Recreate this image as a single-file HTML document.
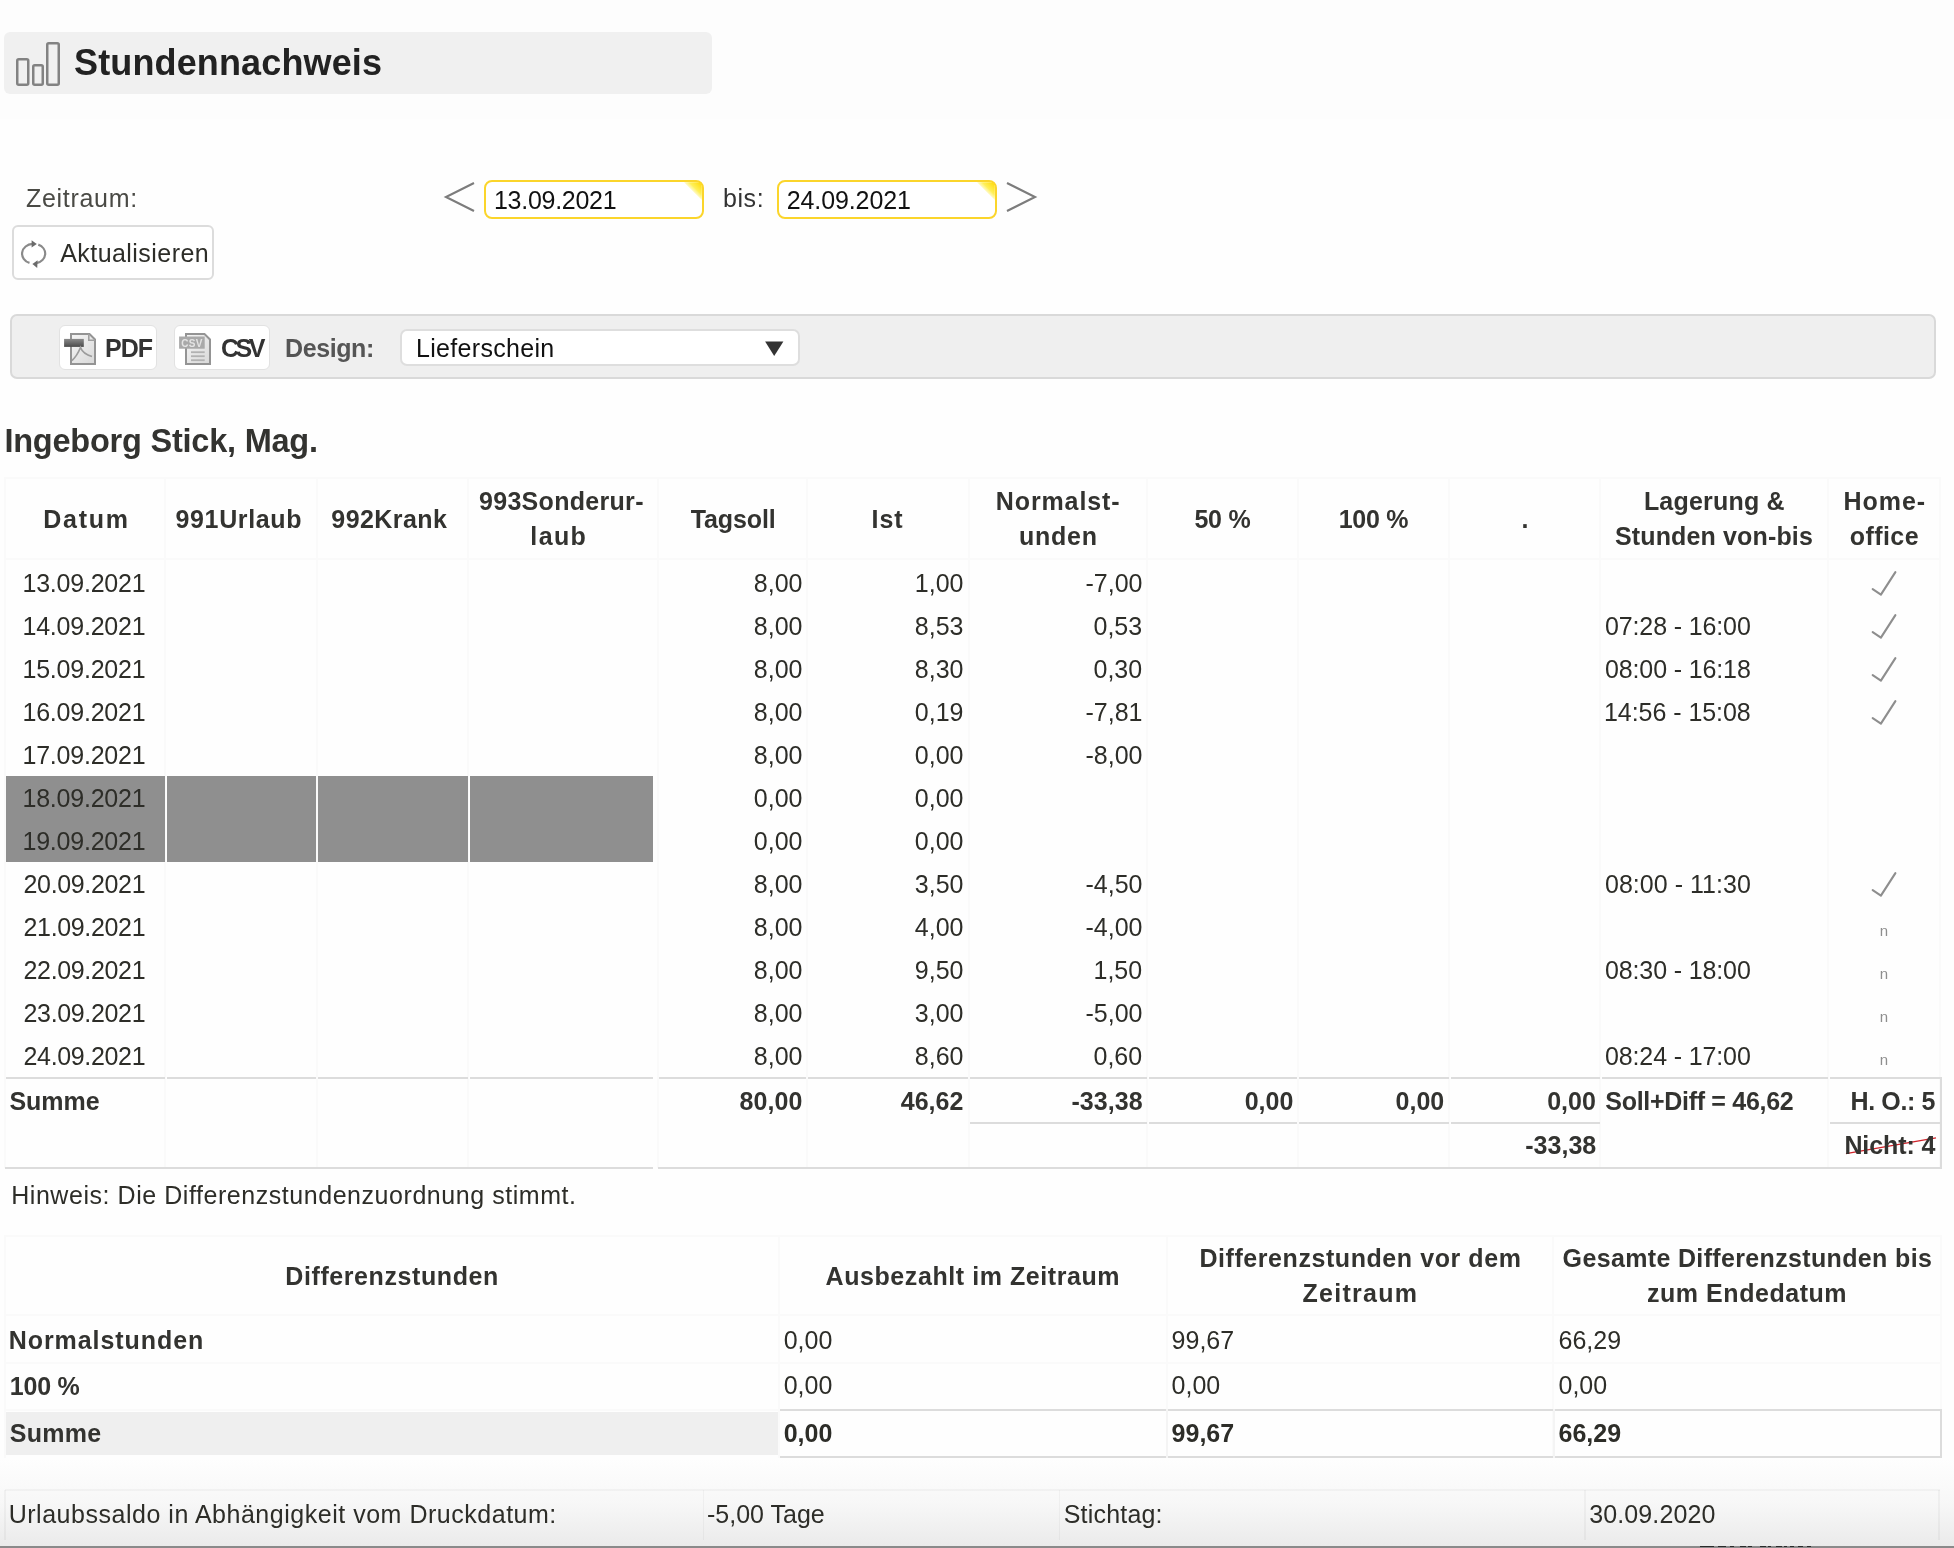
<!DOCTYPE html>
<html><head><meta charset="utf-8"><title>Stundennachweis</title>
<style>
html,body{margin:0;padding:0;background:#fff;}
#root{position:relative;width:1954px;height:1548px;overflow:hidden;background:#fefefe;font-family:"Liberation Sans", sans-serif;}
.t{position:absolute;white-space:pre;line-height:1;font-family:"Liberation Sans", sans-serif;}
#root{will-change:transform;}
</style></head><body><div id="root">
<div style="position:absolute;left:0;top:1459px;width:1954px;height:87px;background:linear-gradient(to bottom, rgba(255,255,255,0) 0%, rgba(200,200,200,0.12) 50%, rgba(190,190,190,0.30) 100%);"></div>
<div style="position:absolute;left:0px;top:0px;width:1954px;height:119px;background:#fdfdfd;"></div>
<div style="position:absolute;left:4px;top:32px;width:708px;height:62px;background:#f0f0f0;border-radius:6px;"></div>
<div style="position:absolute;left:484px;top:180px;width:220px;height:38.5px;box-sizing:border-box;border:2.5px solid #fbd52b;border-radius:8px;background:#fff;overflow:hidden;"></div>
<div style="position:absolute;left:777px;top:180px;width:220px;height:38.5px;box-sizing:border-box;border:2.5px solid #fbd52b;border-radius:8px;background:#fff;overflow:hidden;"></div>
<div style="position:absolute;left:12px;top:225px;width:202px;height:54.5px;box-sizing:border-box;border:2px solid #dcdcdc;border-radius:6px;background:#fff;"></div>
<div style="position:absolute;left:10px;top:314px;width:1926px;height:65px;box-sizing:border-box;border:2px solid #d9d9d9;border-radius:7px;background:#efefef;"></div>
<div style="position:absolute;left:58.5px;top:324.8px;width:98.5px;height:45.6px;box-sizing:border-box;border:1.5px solid #e2e2e2;border-radius:6px;background:#fff;"></div>
<div style="position:absolute;left:173.6px;top:324.8px;width:96.4px;height:45.6px;box-sizing:border-box;border:1.5px solid #e2e2e2;border-radius:6px;background:#fff;"></div>
<div style="position:absolute;left:399.7px;top:328.6px;width:400.5px;height:37.6px;box-sizing:border-box;border:2px solid #dedede;border-radius:7px;background:#fff;"></div>
<div style="position:absolute;left:4px;top:477px;width:2px;height:691px;background:#fafafa;"></div>
<div style="position:absolute;left:164px;top:477px;width:2px;height:691px;background:#fafafa;"></div>
<div style="position:absolute;left:316px;top:477px;width:2px;height:691px;background:#fafafa;"></div>
<div style="position:absolute;left:467px;top:477px;width:2px;height:691px;background:#fafafa;"></div>
<div style="position:absolute;left:657px;top:477px;width:2px;height:691px;background:#fafafa;"></div>
<div style="position:absolute;left:806px;top:477px;width:2px;height:691px;background:#fafafa;"></div>
<div style="position:absolute;left:968px;top:477px;width:2px;height:691px;background:#fafafa;"></div>
<div style="position:absolute;left:1146px;top:477px;width:2px;height:691px;background:#fafafa;"></div>
<div style="position:absolute;left:1297px;top:477px;width:2px;height:691px;background:#fafafa;"></div>
<div style="position:absolute;left:1448px;top:477px;width:2px;height:691px;background:#fafafa;"></div>
<div style="position:absolute;left:1599px;top:477px;width:2px;height:691px;background:#fafafa;"></div>
<div style="position:absolute;left:1827px;top:477px;width:2px;height:691px;background:#fafafa;"></div>
<div style="position:absolute;left:1939px;top:477px;width:2px;height:691px;background:#fafafa;"></div>
<div style="position:absolute;left:5px;top:477px;width:1936px;height:2px;background:#fafafa;"></div>
<div style="position:absolute;left:5px;top:558px;width:1936px;height:2px;background:#fafafa;"></div>
<div style="position:absolute;left:6px;top:776px;width:159px;height:86px;background:#8f8f8f;"></div>
<div style="position:absolute;left:167px;top:776px;width:149px;height:86px;background:#8f8f8f;"></div>
<div style="position:absolute;left:318px;top:776px;width:150px;height:86px;background:#8f8f8f;"></div>
<div style="position:absolute;left:470px;top:776px;width:183px;height:86px;background:#8f8f8f;"></div>
<div style="position:absolute;left:6px;top:1077px;width:159px;height:2px;background:#dcdcdc;"></div>
<div style="position:absolute;left:167px;top:1077px;width:149px;height:2px;background:#dcdcdc;"></div>
<div style="position:absolute;left:318px;top:1077px;width:150px;height:2px;background:#dcdcdc;"></div>
<div style="position:absolute;left:470px;top:1077px;width:183px;height:2px;background:#dcdcdc;"></div>
<div style="position:absolute;left:659px;top:1077px;width:147px;height:2px;background:#dcdcdc;"></div>
<div style="position:absolute;left:808px;top:1077px;width:160px;height:2px;background:#dcdcdc;"></div>
<div style="position:absolute;left:970px;top:1077px;width:177px;height:2px;background:#dcdcdc;"></div>
<div style="position:absolute;left:1149px;top:1077px;width:148px;height:2px;background:#dcdcdc;"></div>
<div style="position:absolute;left:1299px;top:1077px;width:150px;height:2px;background:#dcdcdc;"></div>
<div style="position:absolute;left:1451px;top:1077px;width:149px;height:2px;background:#dcdcdc;"></div>
<div style="position:absolute;left:1602px;top:1077px;width:226px;height:2px;background:#dcdcdc;"></div>
<div style="position:absolute;left:1830px;top:1077px;width:111px;height:2px;background:#dcdcdc;"></div>
<div style="position:absolute;left:970px;top:1121.6px;width:177px;height:2px;background:#dcdcdc;"></div>
<div style="position:absolute;left:1149px;top:1121.6px;width:148px;height:2px;background:#dcdcdc;"></div>
<div style="position:absolute;left:1299px;top:1121.6px;width:150px;height:2px;background:#dcdcdc;"></div>
<div style="position:absolute;left:1451px;top:1121.6px;width:149px;height:2px;background:#dcdcdc;"></div>
<div style="position:absolute;left:1830px;top:1121.6px;width:111px;height:2px;background:#dcdcdc;"></div>
<div style="position:absolute;left:5px;top:1166.8px;width:648px;height:2px;background:#dcdcdc;"></div>
<div style="position:absolute;left:658px;top:1166.8px;width:1283px;height:2px;background:#dcdcdc;"></div>
<div style="position:absolute;left:1939.5px;top:1077px;width:2px;height:91.8px;background:#dcdcdc;"></div>
<div style="position:absolute;left:4px;top:1234.6px;width:2px;height:223px;background:#fafafa;"></div>
<div style="position:absolute;left:778px;top:1234.6px;width:2px;height:223px;background:#fafafa;"></div>
<div style="position:absolute;left:1165.5px;top:1234.6px;width:2px;height:223px;background:#fafafa;"></div>
<div style="position:absolute;left:1552.3px;top:1234.6px;width:2px;height:223px;background:#fafafa;"></div>
<div style="position:absolute;left:1940px;top:1234.6px;width:2px;height:223px;background:#fafafa;"></div>
<div style="position:absolute;left:5px;top:1234.6px;width:1936px;height:2px;background:#fafafa;"></div>
<div style="position:absolute;left:5px;top:1313.5px;width:1936px;height:2px;background:#fafafa;"></div>
<div style="position:absolute;left:5px;top:1362px;width:1936px;height:2px;background:#fafafa;"></div>
<div style="position:absolute;left:5px;top:1409px;width:1936px;height:2px;background:#fafafa;"></div>
<div style="position:absolute;left:6px;top:1412.4px;width:772px;height:42.2px;background:#efefef;"></div>
<div style="position:absolute;left:780px;top:1409px;width:1161px;height:2px;background:#dcdcdc;"></div>
<div style="position:absolute;left:780px;top:1456.2px;width:1161px;height:2px;background:#dcdcdc;"></div>
<div style="position:absolute;left:1939.5px;top:1409px;width:2px;height:49px;background:#dcdcdc;"></div>
<div style="position:absolute;left:1166px;top:1409px;width:1.5px;height:49px;background:#f4f4f4;"></div>
<div style="position:absolute;left:1553px;top:1409px;width:1.5px;height:49px;background:#f4f4f4;"></div>
<div style="position:absolute;left:4px;top:1490px;width:1.5px;height:50px;background:rgba(0,0,0,0.035);"></div>
<div style="position:absolute;left:702.6px;top:1490px;width:1.5px;height:50px;background:rgba(0,0,0,0.035);"></div>
<div style="position:absolute;left:1058.6px;top:1490px;width:1.5px;height:50px;background:rgba(0,0,0,0.035);"></div>
<div style="position:absolute;left:1584.3px;top:1490px;width:1.5px;height:50px;background:rgba(0,0,0,0.035);"></div>
<div style="position:absolute;left:1938px;top:1490px;width:1.5px;height:50px;background:rgba(0,0,0,0.035);"></div>
<div style="position:absolute;left:5px;top:1489px;width:1935px;height:1.5px;background:rgba(0,0,0,0.03);"></div>
<svg width="1954" height="1548" style="position:absolute;left:0;top:0">
<!-- title icon -->
<rect x="17.25" y="59.25" width="11" height="25.5" rx="1.5" fill="none" stroke="#828282" stroke-width="2.5"/>
<rect x="33.25" y="65.25" width="9.5" height="19.5" rx="1.5" fill="none" stroke="#828282" stroke-width="2.5"/>
<rect x="47.25" y="43.25" width="11.5" height="41.5" rx="1.5" fill="none" stroke="#828282" stroke-width="2.5"/>
<!-- chevrons -->
<polyline points="474,183 446,197 474,211" fill="none" stroke="#7c7c7c" stroke-width="2.1"/>
<polyline points="1007,183 1035,197 1007,211" fill="none" stroke="#7c7c7c" stroke-width="2.1"/>
<!-- input corner triangles -->
<defs>
<linearGradient id="yg" x1="1" y1="0" x2="0.35" y2="0.65"><stop offset="0" stop-color="#ffd800"/><stop offset="0.55" stop-color="#fff05a"/><stop offset="1" stop-color="#fffbe0" stop-opacity="0.2"/></linearGradient>
<linearGradient id="docg" x1="0" y1="0" x2="1" y2="1"><stop offset="0" stop-color="#f6f6f6"/><stop offset="1" stop-color="#d8d8d8"/></linearGradient>
<linearGradient id="bandg" x1="0" y1="0" x2="0" y2="1"><stop offset="0" stop-color="#8a8a8a"/><stop offset="1" stop-color="#4a4a4a"/></linearGradient>
</defs>
<path d="M684,182.2 L697,182.2 Q701.8,182.2 701.8,187 L701.8,200 Z" fill="url(#yg)"/>
<path d="M977,182.2 L990,182.2 Q994.8,182.2 994.8,187 L994.8,200 Z" fill="url(#yg)"/>
<!-- refresh icon -->
<path d="M32.5,243.9 A11.2,9.8 0 0 0 29.5,262.9" fill="none" stroke="#8a8a8a" stroke-width="2.2"/>
<path d="M38.3,244.6 A11.2,9.8 0 0 1 36.5,263.2" fill="none" stroke="#8a8a8a" stroke-width="2.2"/>
<path d="M31.6,240.2 L36.8,243.9 L31.6,247.6 Z" fill="#6a6a6a"/>
<path d="M37.6,260.2 L32.4,264.0 L37.2,268.0 Z" fill="#6a6a6a"/>
<!-- select triangle -->
<path d="M765.1,341.5 L783.4,341.5 L774.2,356.1 Z" fill="#333"/>
<!-- PDF icon -->
<path d="M71,334 L89.5,334 L95,339.5 L95,364 L71,364 Z" fill="url(#docg)" stroke="#949494" stroke-width="2"/>
<path d="M88.8,334 L88.8,340.2 L95,340.2" fill="none" stroke="#a0a0a0" stroke-width="1.6"/>
<rect x="64.1" y="338.9" width="19.7" height="8" fill="url(#bandg)"/>
<path d="M72,360.5 Q77,356 80.5,347.5 Q83,354 92,356.5" fill="none" stroke="#9c9c9c" stroke-width="1.7"/>
<!-- CSV icon -->
<path d="M186,334 L204.5,334 L210,339.5 L210,364 L186,364 Z" fill="url(#docg)" stroke="#949494" stroke-width="2"/>
<rect x="179.1" y="336.5" width="25.6" height="12.2" fill="#a9a9a9"/>
<text x="181.2" y="346.6" font-family="Liberation Sans" font-size="10" font-weight="700" fill="#e4e4e4" letter-spacing="0.3">CSV</text>
<rect x="191" y="351.3" width="13.7" height="1.8" fill="#b2b2b2"/>
<rect x="191" y="355.3" width="13.7" height="1.8" fill="#b2b2b2"/>
<rect x="191" y="359.3" width="13.7" height="1.8" fill="#b2b2b2"/>
<polyline points="1872.7,589.2 1880.9,594.6 1895.4,572.1" fill="none" stroke="#8e8e8e" stroke-width="2.1" stroke-linecap="round" stroke-linejoin="round"/><polyline points="1872.7,632.2 1880.9,637.6 1895.4,615.1" fill="none" stroke="#8e8e8e" stroke-width="2.1" stroke-linecap="round" stroke-linejoin="round"/><polyline points="1872.7,675.2 1880.9,680.6 1895.4,658.1" fill="none" stroke="#8e8e8e" stroke-width="2.1" stroke-linecap="round" stroke-linejoin="round"/><polyline points="1872.7,718.2 1880.9,723.6 1895.4,701.1" fill="none" stroke="#8e8e8e" stroke-width="2.1" stroke-linecap="round" stroke-linejoin="round"/><polyline points="1872.7,890.2 1880.9,895.6 1895.4,873.1" fill="none" stroke="#8e8e8e" stroke-width="2.1" stroke-linecap="round" stroke-linejoin="round"/>
<!-- red strike -->
<line x1="1846" y1="1153.7" x2="1936" y2="1137.9" stroke="#d0232a" stroke-width="1.3"/>
</svg>
<div class="t" style="left:74.0px;top:44.5px;font-size:36px;color:#222;font-weight:700;letter-spacing:0.14px;">Stundennachweis</div>
<div class="t" style="left:25.9px;top:185.8px;font-size:25px;color:#4a4a45;letter-spacing:0.72px;">Zeitraum:</div>
<div class="t" style="left:494.0px;top:187.8px;font-size:25px;color:#111;letter-spacing:-0.28px;">13.09.2021</div>
<div class="t" style="left:723.0px;top:185.8px;font-size:25px;color:#333;letter-spacing:0.57px;">bis:</div>
<div class="t" style="left:786.7px;top:187.8px;font-size:25px;color:#111;letter-spacing:-0.10px;">24.09.2021</div>
<div class="t" style="left:60.2px;top:240.8px;font-size:25px;color:#2d2d28;letter-spacing:0.45px;">Aktualisieren</div>
<div class="t" style="left:105.0px;top:335.8px;font-size:25px;color:#333;font-weight:700;letter-spacing:-1.00px;">PDF</div>
<div class="t" style="left:221.0px;top:335.8px;font-size:25px;color:#333;font-weight:700;letter-spacing:-3.50px;">CSV</div>
<div class="t" style="left:285.0px;top:335.8px;font-size:25px;color:#555;font-weight:700;letter-spacing:-0.40px;">Design:</div>
<div class="t" style="left:416.0px;top:335.8px;font-size:25px;color:#111;letter-spacing:0.31px;">Lieferschein</div>
<div class="t" style="left:4.4px;top:424.5px;font-size:32.5px;color:#333330;font-weight:700;letter-spacing:-0.22px;">Ingeborg Stick, Mag.</div>
<div class="t" style="left:43.3px;top:506.8px;font-size:25px;color:#333330;font-weight:700;letter-spacing:1.75px;">Datum</div>
<div class="t" style="left:175.5px;top:506.8px;font-size:25px;color:#333330;font-weight:700;letter-spacing:0.64px;">991Urlaub</div>
<div class="t" style="left:331.3px;top:506.8px;font-size:25px;color:#333330;font-weight:700;letter-spacing:0.44px;">992Krank</div>
<div class="t" style="left:479.0px;top:488.8px;font-size:25px;color:#333330;font-weight:700;letter-spacing:0.30px;">993Sonderur-</div>
<div class="t" style="left:530.3px;top:523.8px;font-size:25px;color:#333330;font-weight:700;letter-spacing:1.40px;">laub</div>
<div class="t" style="left:690.7px;top:506.8px;font-size:25px;color:#333330;font-weight:700;letter-spacing:-0.10px;">Tagsoll</div>
<div class="t" style="left:871.6px;top:506.8px;font-size:25px;color:#333330;font-weight:700;letter-spacing:0.95px;">Ist</div>
<div class="t" style="left:995.8px;top:488.8px;font-size:25px;color:#333330;font-weight:700;letter-spacing:0.88px;">Normalst-</div>
<div class="t" style="left:1018.9px;top:523.8px;font-size:25px;color:#333330;font-weight:700;letter-spacing:0.77px;">unden</div>
<div class="t" style="left:1194.4px;top:506.8px;font-size:25px;color:#333330;font-weight:700;letter-spacing:-0.23px;">50 %</div>
<div class="t" style="left:1338.7px;top:506.8px;font-size:25px;color:#333330;font-weight:700;letter-spacing:-0.30px;">100 %</div>
<div class="t" style="left:1521.5px;top:506.8px;font-size:25px;color:#333330;font-weight:700;">.</div>
<div class="t" style="left:1643.9px;top:488.8px;font-size:25px;color:#333330;font-weight:700;letter-spacing:0.20px;">Lagerung &amp;</div>
<div class="t" style="left:1615.0px;top:523.8px;font-size:25px;color:#333330;font-weight:700;letter-spacing:0.14px;">Stunden von-bis</div>
<div class="t" style="left:1843.6px;top:488.8px;font-size:25px;color:#333330;font-weight:700;letter-spacing:0.95px;">Home-</div>
<div class="t" style="left:1849.8px;top:523.8px;font-size:25px;color:#333330;font-weight:700;letter-spacing:0.42px;">office</div>
<div class="t" style="left:22.5px;top:570.8px;font-size:25px;color:#2d2d28;letter-spacing:-0.23px;">13.09.2021</div>
<div class="t" style="left:753.8px;top:570.8px;font-size:25px;color:#2d2d28;">8,00</div>
<div class="t" style="left:914.8px;top:570.8px;font-size:25px;color:#2d2d28;">1,00</div>
<div class="t" style="left:1085.5px;top:570.8px;font-size:25px;color:#2d2d28;">-7,00</div>
<div class="t" style="left:22.5px;top:613.8px;font-size:25px;color:#2d2d28;letter-spacing:-0.23px;">14.09.2021</div>
<div class="t" style="left:753.8px;top:613.8px;font-size:25px;color:#2d2d28;">8,00</div>
<div class="t" style="left:914.8px;top:613.8px;font-size:25px;color:#2d2d28;">8,53</div>
<div class="t" style="left:1093.5px;top:613.8px;font-size:25px;color:#2d2d28;">0,53</div>
<div class="t" style="left:1605.0px;top:613.8px;font-size:25px;color:#2d2d28;letter-spacing:-0.13px;">07:28 - 16:00</div>
<div class="t" style="left:22.5px;top:656.8px;font-size:25px;color:#2d2d28;letter-spacing:-0.23px;">15.09.2021</div>
<div class="t" style="left:753.8px;top:656.8px;font-size:25px;color:#2d2d28;">8,00</div>
<div class="t" style="left:914.8px;top:656.8px;font-size:25px;color:#2d2d28;">8,30</div>
<div class="t" style="left:1093.5px;top:656.8px;font-size:25px;color:#2d2d28;">0,30</div>
<div class="t" style="left:1605.0px;top:656.8px;font-size:25px;color:#2d2d28;letter-spacing:-0.13px;">08:00 - 16:18</div>
<div class="t" style="left:22.5px;top:699.8px;font-size:25px;color:#2d2d28;letter-spacing:-0.23px;">16.09.2021</div>
<div class="t" style="left:753.8px;top:699.8px;font-size:25px;color:#2d2d28;">8,00</div>
<div class="t" style="left:914.8px;top:699.8px;font-size:25px;color:#2d2d28;">0,19</div>
<div class="t" style="left:1085.5px;top:699.8px;font-size:25px;color:#2d2d28;">-7,81</div>
<div class="t" style="left:1604.0px;top:699.8px;font-size:25px;color:#2d2d28;letter-spacing:-0.05px;">14:56 - 15:08</div>
<div class="t" style="left:22.5px;top:742.8px;font-size:25px;color:#2d2d28;letter-spacing:-0.23px;">17.09.2021</div>
<div class="t" style="left:753.8px;top:742.8px;font-size:25px;color:#2d2d28;">8,00</div>
<div class="t" style="left:914.8px;top:742.8px;font-size:25px;color:#2d2d28;">0,00</div>
<div class="t" style="left:1085.5px;top:742.8px;font-size:25px;color:#2d2d28;">-8,00</div>
<div class="t" style="left:22.5px;top:785.8px;font-size:25px;color:#2d2d28;letter-spacing:-0.23px;">18.09.2021</div>
<div class="t" style="left:753.8px;top:785.8px;font-size:25px;color:#2d2d28;">0,00</div>
<div class="t" style="left:914.8px;top:785.8px;font-size:25px;color:#2d2d28;">0,00</div>
<div class="t" style="left:22.5px;top:828.8px;font-size:25px;color:#2d2d28;letter-spacing:-0.23px;">19.09.2021</div>
<div class="t" style="left:753.8px;top:828.8px;font-size:25px;color:#2d2d28;">0,00</div>
<div class="t" style="left:914.8px;top:828.8px;font-size:25px;color:#2d2d28;">0,00</div>
<div class="t" style="left:23.5px;top:871.8px;font-size:25px;color:#2d2d28;letter-spacing:-0.34px;">20.09.2021</div>
<div class="t" style="left:753.8px;top:871.8px;font-size:25px;color:#2d2d28;">8,00</div>
<div class="t" style="left:914.8px;top:871.8px;font-size:25px;color:#2d2d28;">3,50</div>
<div class="t" style="left:1085.5px;top:871.8px;font-size:25px;color:#2d2d28;">-4,50</div>
<div class="t" style="left:1605.0px;top:871.8px;font-size:25px;color:#2d2d28;letter-spacing:0.03px;">08:00 - 11:30</div>
<div class="t" style="left:23.5px;top:914.8px;font-size:25px;color:#2d2d28;letter-spacing:-0.34px;">21.09.2021</div>
<div class="t" style="left:753.8px;top:914.8px;font-size:25px;color:#2d2d28;">8,00</div>
<div class="t" style="left:914.8px;top:914.8px;font-size:25px;color:#2d2d28;">4,00</div>
<div class="t" style="left:1085.5px;top:914.8px;font-size:25px;color:#2d2d28;">-4,00</div>
<div class="t" style="left:23.5px;top:957.8px;font-size:25px;color:#2d2d28;letter-spacing:-0.34px;">22.09.2021</div>
<div class="t" style="left:753.8px;top:957.8px;font-size:25px;color:#2d2d28;">8,00</div>
<div class="t" style="left:914.8px;top:957.8px;font-size:25px;color:#2d2d28;">9,50</div>
<div class="t" style="left:1093.5px;top:957.8px;font-size:25px;color:#2d2d28;">1,50</div>
<div class="t" style="left:1605.0px;top:957.8px;font-size:25px;color:#2d2d28;letter-spacing:-0.13px;">08:30 - 18:00</div>
<div class="t" style="left:23.5px;top:1000.8px;font-size:25px;color:#2d2d28;letter-spacing:-0.34px;">23.09.2021</div>
<div class="t" style="left:753.8px;top:1000.8px;font-size:25px;color:#2d2d28;">8,00</div>
<div class="t" style="left:914.8px;top:1000.8px;font-size:25px;color:#2d2d28;">3,00</div>
<div class="t" style="left:1085.5px;top:1000.8px;font-size:25px;color:#2d2d28;">-5,00</div>
<div class="t" style="left:23.5px;top:1043.8px;font-size:25px;color:#2d2d28;letter-spacing:-0.34px;">24.09.2021</div>
<div class="t" style="left:753.8px;top:1043.8px;font-size:25px;color:#2d2d28;">8,00</div>
<div class="t" style="left:914.8px;top:1043.8px;font-size:25px;color:#2d2d28;">8,60</div>
<div class="t" style="left:1093.5px;top:1043.8px;font-size:25px;color:#2d2d28;">0,60</div>
<div class="t" style="left:1605.0px;top:1043.8px;font-size:25px;color:#2d2d28;letter-spacing:-0.13px;">08:24 - 17:00</div>
<div class="t" style="left:9.5px;top:1088.8px;font-size:25px;color:#333330;font-weight:700;letter-spacing:-0.05px;">Summe</div>
<div class="t" style="left:739.4px;top:1088.8px;font-size:25px;color:#333330;font-weight:700;letter-spacing:0.10px;">80,00</div>
<div class="t" style="left:900.8px;top:1088.8px;font-size:25px;color:#333330;font-weight:700;">46,62</div>
<div class="t" style="left:1071.4px;top:1088.8px;font-size:25px;color:#333330;font-weight:700;letter-spacing:0.06px;">-33,38</div>
<div class="t" style="left:1244.7px;top:1088.8px;font-size:25px;color:#333330;font-weight:700;">0,00</div>
<div class="t" style="left:1395.6px;top:1088.8px;font-size:25px;color:#333330;font-weight:700;">0,00</div>
<div class="t" style="left:1547.2px;top:1088.8px;font-size:25px;color:#333330;font-weight:700;">0,00</div>
<div class="t" style="left:1605.3px;top:1088.8px;font-size:25px;color:#333330;font-weight:700;letter-spacing:-0.30px;">Soll+Diff = 46,62</div>
<div class="t" style="left:1850.5px;top:1088.8px;font-size:25px;color:#333330;font-weight:700;letter-spacing:-0.36px;">H. O.: 5</div>
<div class="t" style="left:1525.3px;top:1132.8px;font-size:25px;color:#333330;font-weight:700;">-33,38</div>
<div class="t" style="left:1844.4px;top:1132.8px;font-size:25px;color:#333330;font-weight:700;letter-spacing:-0.09px;">Nicht: 4</div>
<div class="t" style="left:11.2px;top:1182.8px;font-size:25px;color:#2d2d28;letter-spacing:0.55px;">Hinweis: Die Differenzstundenzuordnung stimmt.</div>
<div class="t" style="left:285.3px;top:1263.8px;font-size:25px;color:#333330;font-weight:700;letter-spacing:0.59px;">Differenzstunden</div>
<div class="t" style="left:825.6px;top:1263.8px;font-size:25px;color:#333330;font-weight:700;letter-spacing:0.57px;">Ausbezahlt im Zeitraum</div>
<div class="t" style="left:1199.4px;top:1245.8px;font-size:25px;color:#333330;font-weight:700;letter-spacing:0.57px;">Differenzstunden vor dem</div>
<div class="t" style="left:1302.5px;top:1280.8px;font-size:25px;color:#333330;font-weight:700;letter-spacing:1.27px;">Zeitraum</div>
<div class="t" style="left:1562.6px;top:1245.8px;font-size:25px;color:#333330;font-weight:700;letter-spacing:0.35px;">Gesamte Differenzstunden bis</div>
<div class="t" style="left:1647.0px;top:1280.8px;font-size:25px;color:#333330;font-weight:700;letter-spacing:0.54px;">zum Endedatum</div>
<div class="t" style="left:8.7px;top:1327.8px;font-size:25px;color:#333330;font-weight:700;letter-spacing:0.94px;">Normalstunden</div>
<div class="t" style="left:9.7px;top:1373.8px;font-size:25px;color:#333330;font-weight:700;letter-spacing:-0.18px;">100 %</div>
<div class="t" style="left:9.7px;top:1421.3px;font-size:25px;color:#333330;font-weight:700;letter-spacing:0.32px;">Summe</div>
<div class="t" style="left:783.7px;top:1327.8px;font-size:25px;color:#2d2d28;">0,00</div>
<div class="t" style="left:1171.6px;top:1327.8px;font-size:25px;color:#2d2d28;">99,67</div>
<div class="t" style="left:1558.5px;top:1327.8px;font-size:25px;color:#2d2d28;">66,29</div>
<div class="t" style="left:783.7px;top:1372.8px;font-size:25px;color:#2d2d28;">0,00</div>
<div class="t" style="left:1171.6px;top:1372.8px;font-size:25px;color:#2d2d28;">0,00</div>
<div class="t" style="left:1558.5px;top:1372.8px;font-size:25px;color:#2d2d28;">0,00</div>
<div class="t" style="left:783.7px;top:1420.8px;font-size:25px;color:#2d2d28;font-weight:700;">0,00</div>
<div class="t" style="left:1171.6px;top:1420.8px;font-size:25px;color:#2d2d28;font-weight:700;">99,67</div>
<div class="t" style="left:1558.5px;top:1420.8px;font-size:25px;color:#2d2d28;font-weight:700;">66,29</div>
<div class="t" style="left:8.7px;top:1501.8px;font-size:25px;color:#2d2d28;letter-spacing:0.52px;">Urlaubssaldo in Abhängigkeit vom Druckdatum:</div>
<div class="t" style="left:707.0px;top:1501.8px;font-size:25px;color:#2d2d28;">-5,00 Tage</div>
<div class="t" style="left:1063.7px;top:1501.8px;font-size:25px;color:#2d2d28;letter-spacing:0.20px;">Stichtag:</div>
<div class="t" style="left:1589.3px;top:1501.8px;font-size:25px;color:#2d2d28;letter-spacing:0.10px;">30.09.2020</div>
<div class="t" style="left:1879.7px;top:923.3px;font-size:15px;color:#8e8e8e;">n</div>
<div class="t" style="left:1879.7px;top:966.3px;font-size:15px;color:#8e8e8e;">n</div>
<div class="t" style="left:1879.7px;top:1009.3px;font-size:15px;color:#8e8e8e;">n</div>
<div class="t" style="left:1879.7px;top:1052.3px;font-size:15px;color:#8e8e8e;">n</div>
<div style="position:absolute;left:0;top:1545.5px;width:1954px;height:3px;background:#8a8a8a;"></div><div style="position:absolute;left:1700px;top:1546px;width:13.8px;height:1.3px;background:#2a2a2a;"></div><div style="position:absolute;left:1718px;top:1546px;width:8.4px;height:1.3px;background:#2a2a2a;"></div><div style="position:absolute;left:1729.9px;top:1546px;width:4.2px;height:1.3px;background:#2a2a2a;"></div><div style="position:absolute;left:1739.5px;top:1546px;width:6.5px;height:1.3px;background:#2a2a2a;"></div><div style="position:absolute;left:1747.9px;top:1546px;width:4.2px;height:1.3px;background:#2a2a2a;"></div><div style="position:absolute;left:1759.8px;top:1546px;width:6.2px;height:1.3px;background:#2a2a2a;"></div><div style="position:absolute;left:1767.9px;top:1546px;width:3.1px;height:1.3px;background:#2a2a2a;"></div><div style="position:absolute;left:1776px;top:1546px;width:6.0px;height:1.3px;background:#2a2a2a;"></div><div style="position:absolute;left:1783.6px;top:1546px;width:3.1px;height:1.3px;background:#2a2a2a;"></div><div style="position:absolute;left:1789.7px;top:1546px;width:4.6px;height:1.3px;background:#2a2a2a;"></div><div style="position:absolute;left:1798.2px;top:1546px;width:4.6px;height:1.3px;background:#2a2a2a;"></div><div style="position:absolute;left:1806.6px;top:1546px;width:4.2px;height:1.3px;background:#2a2a2a;"></div>
</div></body></html>
